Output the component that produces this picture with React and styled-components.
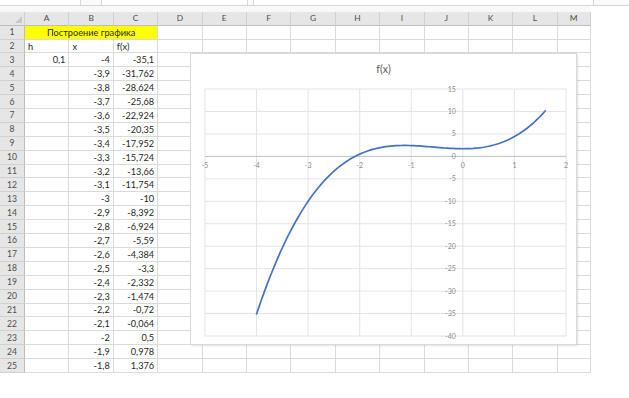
import React from 'react'
import styled, { createGlobalStyle } from 'styled-components'

const GlobalStyle = createGlobalStyle`
  html, body {
    margin: 0;
    padding: 0;
    background: #ffffff;
  }
  body {
    font-family: Lato, "Open Sans", "Liberation Sans", sans-serif;
  }
`

const COL_W = 44.4
const ROW_H = 13.9
const COLS = ['A', 'B', 'C', 'D', 'E', 'F', 'G', 'H', 'I', 'J', 'K', 'L', 'M']

const xs = ['-4', '-3,9', '-3,8', '-3,7', '-3,6', '-3,5', '-3,4', '-3,3', '-3,2', '-3,1', '-3', '-2,9', '-2,8',
  '-2,7', '-2,6', '-2,5', '-2,4', '-2,3', '-2,2', '-2,1', '-2', '-1,9', '-1,8']
const fs = ['-35,1', '-31,762', '-28,624', '-25,68', '-22,924', '-20,35', '-17,952', '-15,724', '-13,66',
  '-11,754', '-10', '-8,392', '-6,924', '-5,59', '-4,384', '-3,3', '-2,332', '-1,474', '-0,72', '-0,064',
  '0,5', '0,978', '1,376']

const Page = styled.div`
  position: relative;
  width: 629px;
  height: 398px;
  background: #fff;
  overflow: hidden;
`
const TopBar = styled.div`
  display: flex;
  height: 5px;
  border-bottom: 1px solid #d6d6d6;
  background: #fafafa;
`
const TopBox = styled.div`
  width: ${(p) => p.$w}px;
  margin-right: ${(p) => p.$gap || 0}px;
  background: #fff;
  border-right: 1px solid #d6d6d6;
  border-left: ${(p) => (p.$left ? '1px solid #d6d6d6' : 'none')};
`
const Spacer = styled.div`
  height: 6px;
  background: #f8f8f8;
  width: 590px;
`
const Sheet = styled.div`
  display: grid;
  grid-template-columns: 25px repeat(12, ${COL_W}px) 33px;
  grid-template-rows: 13.7px;
  grid-auto-rows: ${ROW_H}px;
  width: 590px;
  font-size: 9.2px;
  color: #1f1f1f;
`
const Corner = styled.div`
  background: #e6e6e6;
  border-right: 1px solid #cfcfcf;
  border-bottom: 1px solid #bdbdbd;
  box-sizing: border-box;
  position: relative;
  &::after {
    content: '';
    position: absolute;
    right: 2px;
    bottom: 2px;
    border-left: 7px solid transparent;
    border-bottom: 7px solid #c8c8c8;
  }
`
const ColHead = styled.div`
  background: #e6e6e6;
  border-right: 1px solid #d0d0d0;
  border-bottom: 1px solid #bdbdbd;
  box-sizing: border-box;
  display: flex;
  align-items: center;
  justify-content: center;
  color: #4d4d4d;
  font-size: 8.4px;
`
const RowHead = styled.div`
  background: #e6e6e6;
  border-right: 1px solid #bdbdbd;
  border-bottom: 1px solid #d0d0d0;
  box-sizing: border-box;
  display: flex;
  align-items: center;
  justify-content: center;
  color: #4d4d4d;
  font-size: 8.6px;
`
const Cell = styled.div`
  grid-column: span ${(p) => p.$span || 1};
  background: ${(p) => p.$bg || '#fff'};
  border-right: 1px solid #dadada;
  border-bottom: 1px solid #dadada;
  box-sizing: border-box;
  display: flex;
  align-items: center;
  justify-content: ${(p) => (p.$align === 'center' ? 'center' : p.$align === 'left' ? 'flex-start' : 'flex-end')};
  padding: 0 3px;
  white-space: nowrap;
  overflow: hidden;
`

const Chart = styled.div`
  position: absolute;
  left: 190px;
  top: 53px;
  width: 387px;
  height: 292px;
  background: #fff;
  border: 1px solid #d9d9d9;
  box-shadow: 1px 1px 2px rgba(0, 0, 0, 0.12);
  box-sizing: border-box;
  display: flex;
  flex-direction: column;
  align-items: center;
`
const ChartTitle = styled.div`
  margin-top: 9px;
  font-size: 10.5px;
  color: #595959;
`
const Plot = styled.svg`
  position: absolute;
  left: 0;
  top: 0;
`

const PL = 14
const PR = 375
const PT = 35
const PB = 282
const sx = (x) => PL + ((x + 5) / 7) * (PR - PL)
const sy = (y) => PT + ((15 - y) / 55) * (PB - PT)
const f = (x) => x * x * x + 1.7 * x * x + 1.7

const curve = () => {
  const pts = []
  for (let i = 0; i <= 112; i++) {
    const x = -4 + i * 0.05
    pts.push(`${i === 0 ? 'M' : 'L'}${sx(x).toFixed(2)},${sy(f(x)).toFixed(2)}`)
  }
  return pts.join(' ')
}

const ChartPlot = () => {
  const xTicks = [-5, -4, -3, -2, -1, 0, 1, 2]
  const yTicks = [15, 10, 5, 0, -5, -10, -15, -20, -25, -30, -35, -40]
  return (
    <Plot width="387" height="292" viewBox="0 0 387 292">
      {xTicks.map((t) => (
        <line key={'vx' + t} x1={sx(t)} x2={sx(t)} y1={PT} y2={PB} stroke="#e3e3e3" strokeWidth="1" />
      ))}
      {yTicks.map((t) => (
        <line key={'hy' + t} x1={PL} x2={PR} y1={sy(t)} y2={sy(t)} stroke={t === 0 ? '#bfbfbf' : '#e3e3e3'} strokeWidth="1" />
      ))}
      {xTicks.map((t) => (
        <text key={'tx' + t} x={sx(t)} y={sy(0) + 12} fontSize="7" fill="#8c8c8c" textAnchor="middle"
          fontFamily="Lato, 'Liberation Sans', sans-serif">{t}</text>
      ))}
      {yTicks.map((t) => (
        <text key={'ty' + t} x={sx(0) - 7} y={sy(t) + 2.5} fontSize="7" fill="#8c8c8c" textAnchor="end"
          fontFamily="Lato, 'Liberation Sans', sans-serif">{t}</text>
      ))}
      <path d={curve()} fill="none" stroke="#4472c4" strokeWidth="1.7" strokeLinejoin="round" strokeLinecap="round" />
    </Plot>
  )
}

const App = () => {
  const rows = []
  for (let r = 1; r <= 25; r++) {
    const cells = []
    if (r === 1) {
      cells.push(<Cell key="a" $span={3} $bg="#ffff00" $align="center">Построение графика</Cell>)
    } else if (r === 2) {
      cells.push(<Cell key="a" $align="left">h</Cell>)
      cells.push(<Cell key="b" $align="left">x</Cell>)
      cells.push(<Cell key="c" $align="left">f(x)</Cell>)
    } else {
      cells.push(<Cell key="a">{r === 3 ? '0,1' : ''}</Cell>)
      cells.push(<Cell key="b">{xs[r - 3]}</Cell>)
      cells.push(<Cell key="c">{fs[r - 3]}</Cell>)
    }
    for (let c = 3; c < COLS.length; c++) cells.push(<Cell key={COLS[c]} />)
    rows.push(
      <React.Fragment key={r}>
        <RowHead>{r}</RowHead>
        {cells}
      </React.Fragment>
    )
  }

  return (
    <Page>
      <GlobalStyle />
      <TopBar>
        <TopBox $w={80} $gap={20} />
        <TopBox $w={145} $gap={5} $left />
        <TopBox $w={339} $left />
      </TopBar>
      <Spacer />
      <Sheet>
        <Corner />
        {COLS.map((c) => (
          <ColHead key={c}>{c}</ColHead>
        ))}
        {rows}
      </Sheet>
      <Chart>
        <ChartPlot />
        <ChartTitle>f(x)</ChartTitle>
      </Chart>
    </Page>
  )
}

export default App
